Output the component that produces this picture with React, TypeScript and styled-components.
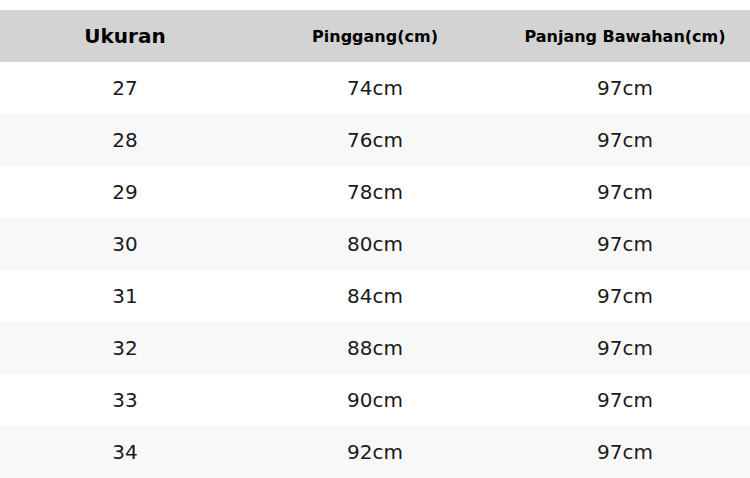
import React from 'react';
import styled, { createGlobalStyle } from 'styled-components';

const GlobalStyle = createGlobalStyle`
  html, body {
    margin: 0;
    padding: 0;
    background: #ffffff;
    font-family: "DejaVu Sans", "Noto Sans", sans-serif;
  }
`;

const Page = styled.div`
  width: 750px;
  height: 478px;
  padding-top: 10px;
  box-sizing: border-box;
  overflow: hidden;
`;

const Table = styled.table`
  width: 750px;
  border-collapse: collapse;
  table-layout: fixed;
`;

const HeadRow = styled.tr`
  background: #d3d3d3;
  height: 52px;
`;

const HeadCell = styled.th<{ $big?: boolean }>`
  padding: 0;
  text-align: center;
  vertical-align: middle;
  font-weight: bold;
  color: #000;
  font-size: ${p => (p.$big ? '20px' : '16px')};
`;

const Row = styled.tr<{ $alt: boolean }>`
  height: 52px;
  background: ${p => (p.$alt ? '#f8f8f8' : '#ffffff')};
`;

const Cell = styled.td`
  padding: 0;
  text-align: center;
  vertical-align: middle;
  font-size: 20px;
  color: #1a1a1a;
`;

const sizes = [
  { size: '27', waist: '74cm', length: '97cm' },
  { size: '28', waist: '76cm', length: '97cm' },
  { size: '29', waist: '78cm', length: '97cm' },
  { size: '30', waist: '80cm', length: '97cm' },
  { size: '31', waist: '84cm', length: '97cm' },
  { size: '32', waist: '88cm', length: '97cm' },
  { size: '33', waist: '90cm', length: '97cm' },
  { size: '34', waist: '92cm', length: '97cm' },
];

export default function App() {
  return (
    <>
      <GlobalStyle />
      <Page>
        <Table>
          <thead>
            <HeadRow>
              <HeadCell $big>Ukuran</HeadCell>
              <HeadCell>Pinggang(cm)</HeadCell>
              <HeadCell>Panjang Bawahan(cm)</HeadCell>
            </HeadRow>
          </thead>
          <tbody>
            {sizes.map((r, i) => (
              <Row key={r.size} $alt={i % 2 === 1}>
                <Cell>{r.size}</Cell>
                <Cell>{r.waist}</Cell>
                <Cell>{r.length}</Cell>
              </Row>
            ))}
          </tbody>
        </Table>
      </Page>
    </>
  );
}
